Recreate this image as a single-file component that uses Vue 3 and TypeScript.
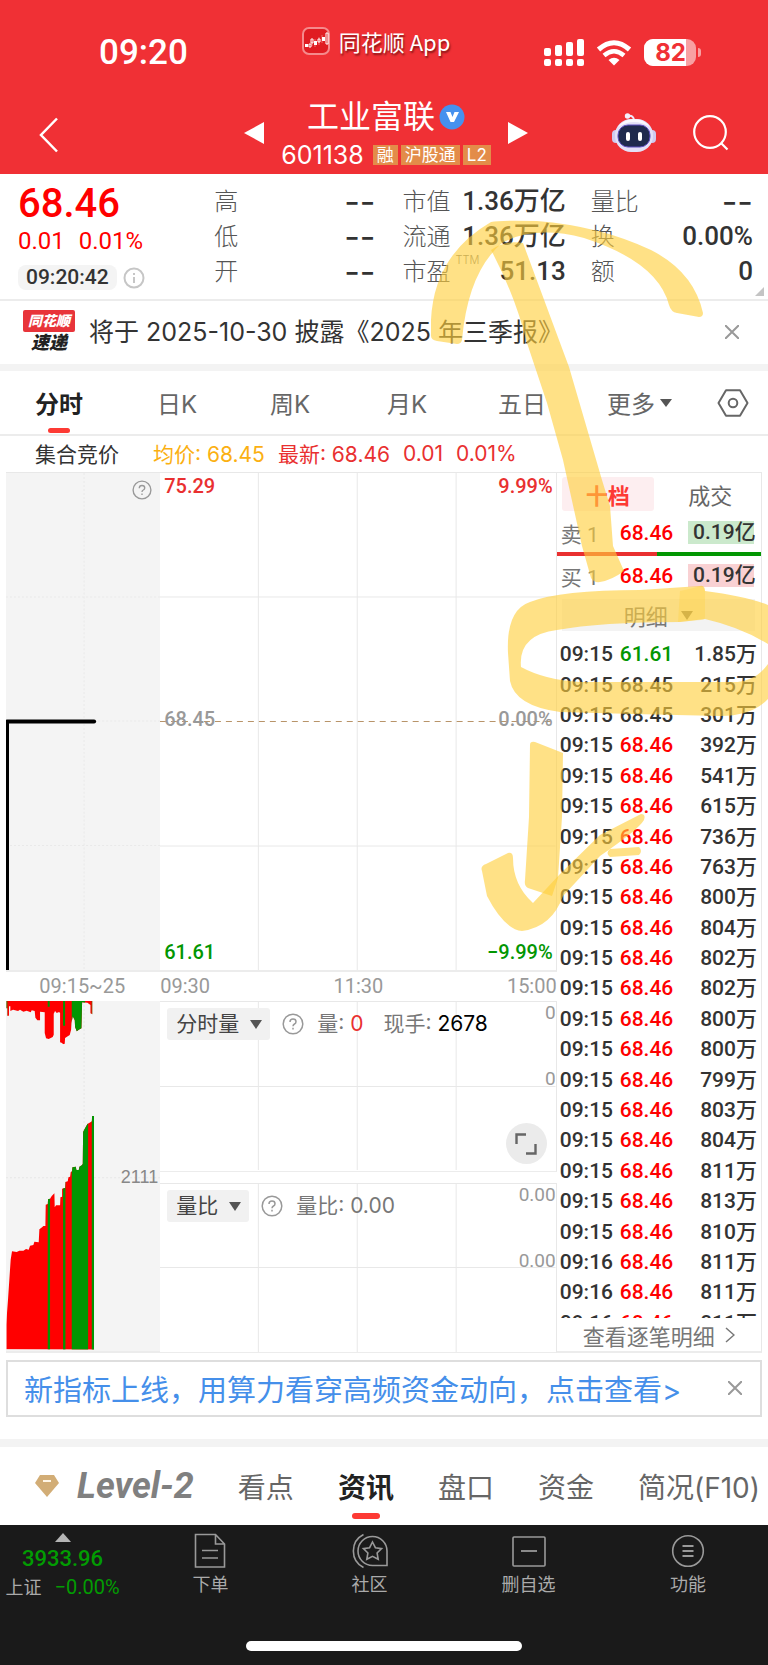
<script setup lang="ts">
interface Pair {
  label: string
  value: string
  note?: string
  dash?: boolean
}

const stats: Pair[][] = [
  [
    { label: '高', value: '--', dash: true },
    { label: '低', value: '--', dash: true },
    { label: '开', value: '--', dash: true },
  ],
  [
    { label: '市值', value: '1.36万亿' },
    { label: '流通', value: '1.36万亿' },
    { label: '市盈', value: '51.13', note: 'TTM' },
  ],
  [
    { label: '量比', value: '--', dash: true },
    { label: '换', value: '0.00%' },
    { label: '额', value: '0' },
  ],
]

const periods: string[] = ['分时', '日K', '周K', '月K', '五日', '更多']

const amounts: string[] = [
  '1.85', '215', '301', '392', '541', '615', '736', '763', '800', '804', '802', '802',
  '800', '800', '799', '803', '804', '811', '813', '810', '811', '811', '811',
]

const trades = amounts.map((amount, i) => ({
  time: i < 20 ? '09:15' : '09:16',
  price: i === 0 ? '61.61' : i < 3 ? '68.45' : '68.46',
  tone: i === 0 ? 'down' : i < 3 ? 'flat' : 'up',
  amount: amount + '万',
}))

const sections: string[] = ['看点', '资讯', '盘口', '资金', '简况(F10)']
</script>

<template>
  <div class="app">
    <header class="top">
      <div class="status">
        <span class="clock">09:20</span>
        <span class="source">
          <svg class="applogo" viewBox="0 0 28 28" aria-hidden="true">
            <rect x="1" y="1" width="26" height="26" rx="6" fill="#e01c22" stroke="#f58a8c" stroke-width="2" />
            <path d="M10 13v6M13 12v8M17 10v8M20 8v8" stroke="#f06a6c" stroke-width="1" />
            <path d="M3 17h3v3H3zM12 14h3v4h-3zM20 10h3v4h-3z" fill="#fff" />
            <path d="M7 17h2v3H7zM9 12h2v4H9zM16 12h2v3h-2zM24 6h2v11h-2z" fill="none" stroke="#fff" stroke-width="1" />
          </svg>
          同花顺 App
        </span>
        <span class="signals">
          <svg class="cell" viewBox="0 0 40 28" aria-hidden="true">
            <g fill="#fff">
              <rect x="0" y="9" width="7" height="8" rx="2" /><rect x="11" y="6" width="7" height="11" rx="2" />
              <rect x="22" y="3" width="7" height="14" rx="2" /><rect x="33" y="0" width="7" height="17" rx="2" />
              <rect x="0" y="20" width="7" height="7" rx="2" /><rect x="11" y="20" width="7" height="7" rx="2" />
              <rect x="22" y="20" width="7" height="7" rx="2" /><rect x="33" y="20" width="7" height="7" rx="2" />
            </g>
          </svg>
          <svg class="wifi" viewBox="0 0 36 26" aria-hidden="true">
            <path d="M2.500 9.500Q18-4 33.500 9.500" fill="none" stroke="#fff" stroke-width="5" />
            <path d="M8 15.500Q18 7 28 15.500" fill="none" stroke="#fff" stroke-width="4.500" />
            <path d="M12.500 20q5.500-4.500 11 0L18 25.500z" fill="#fff" />
          </svg>
          <span class="battery"><span class="level">82</span></span>
          <span class="tip"></span>
        </span>
      </div>
      <nav class="nav">
        <button class="plain back" aria-label="返回">
          <svg width="20" height="36" viewBox="0 0 20 36"><path d="M18 1.500 2 18l16 16.500" fill="none" stroke="#fff" stroke-width="2.500" /></svg>
        </button>
        <div class="switcher">
          <button class="plain" aria-label="上一只"><svg width="20" height="22" viewBox="0 0 20 22"><path d="M20 0v22L0 11z" fill="#fff" /></svg></button>
          <div class="stock">
            <h1>
              工业富联
              <svg width="26" height="26" viewBox="0 0 26 26" aria-hidden="true">
                <circle cx="13" cy="13" r="12.500" fill="#4691ee" />
                <path d="M7 8h4.500l2 5 2-5H20l-5 10h-3.500z" fill="#fff" />
              </svg>
            </h1>
            <p><span class="code">601138</span><b>融</b><b>沪股通</b><b>L2</b></p>
          </div>
          <button class="plain" aria-label="下一只"><svg width="20" height="22" viewBox="0 0 20 22"><path d="M0 0v22l20-11z" fill="#fff" /></svg></button>
        </div>
        <div class="tools">
          <button class="plain" aria-label="智能助手">
            <svg width="44" height="42" viewBox="0 0 44 42">
              <path d="M16 4q6-1 6 5" fill="none" stroke="#eee9fb" stroke-width="2" />
              <circle cx="15.500" cy="4" r="2.700" fill="#f4f1fd" />
              <rect x="0" y="18" width="8" height="13" rx="4" fill="#cfcaf0" /><rect x="36" y="18" width="8" height="13" rx="4" fill="#cfcaf0" />
              <rect x="3" y="7" width="38" height="33" rx="16" fill="#e3e0f7" />
              <path d="M6 15Q12 7 22 7t16 8Q30 10 22 10T6 15z" fill="#faf9ff" />
              <rect x="6" y="13" width="32" height="22" rx="10" fill="#1f2a4d" stroke="#5e4ec0" stroke-width="1" />
              <rect x="14" y="20" width="4" height="9" rx="2" fill="#fff" /><rect x="26" y="20" width="4" height="9" rx="2" fill="#fff" />
            </svg>
          </button>
          <button class="plain" aria-label="搜索">
            <svg width="36" height="36" viewBox="0 0 36 36"><circle cx="17" cy="17" r="15.800" fill="none" stroke="#fff" stroke-width="2.200" /><path d="m28 28 6.500 6.500" stroke="#fff" stroke-width="2.200" /></svg>
          </button>
        </div>
      </nav>
    </header>

    <section class="quote">
      <div class="price">
        <strong>68.46</strong>
        <p class="change"><span>0.01</span><span>0.01%</span></p>
        <p class="stamp">
          <time>09:20:42</time>
          <svg width="22" height="22" viewBox="0 0 22 22" aria-hidden="true"><circle cx="11" cy="11" r="9.500" fill="none" stroke="#c6c6c6" stroke-width="2" /><path d="M11 6v2M11 10v6" stroke="#c6c6c6" stroke-width="2" /></svg>
        </p>
      </div>
      <dl v-for="(col, c) in stats" :key="c" class="stat">
        <div v-for="row in col" :key="row.label">
          <dt>{{ row.label }}<sup v-if="row.note">{{ row.note }}</sup></dt>
          <dd :class="{ dash: row.dash }">{{ row.value }}</dd>
        </div>
      </dl>
      <span class="corner"></span>
    </section>

    <section class="news">
      <span class="express"><b>同花顺</b><i>速递</i></span>
      <a href="#">将于 2025-10-30 披露《2025 年三季报》</a>
      <button class="plain" aria-label="关闭">
        <svg width="14" height="14" viewBox="0 0 14 14"><path d="m0 0 14 14M14 0 0 14" stroke="#999" stroke-width="2" /></svg>
      </button>
    </section>

    <nav class="periods">
      <button v-for="(p, i) in periods" :key="p" class="plain" :class="{ on: i === 0 }">
        {{ p }}<svg v-if="i === 5" width="12" height="8" viewBox="0 0 12 8"><path d="M0 0h12L6 8z" fill="#555" /></svg>
      </button>
      <button class="plain gear" aria-label="设置">
        <svg width="32" height="28" viewBox="0 0 32 28"><path d="M9 1.200h14L30.500 14 23 26.800H9L1.500 14z" fill="none" stroke="#666" stroke-width="2" stroke-linejoin="round" /><circle cx="16" cy="14" r="4.300" fill="none" stroke="#666" stroke-width="2" /></svg>
      </button>
    </nav>

    <div class="summary">
      <span class="mode">集合竞价</span><span class="avg">均价: 68.45</span>
      <span>最新: 68.46</span><span>0.01</span><span>0.01%</span>
    </div>

    <main class="board">
      <div class="plot auction">
        <svg class="canvas" viewBox="0 0 154 499" preserveAspectRatio="none" aria-hidden="true">
          <path d="M78 0v499M0 124.500h154M0 249h154M0 374h154" stroke="#e9e9e9" stroke-width="1" stroke-dasharray="2 2" fill="none" />
          <path d="M1.500 499V249.500" stroke="#000" stroke-width="3" />
          <path d="M1 249.500h87" stroke="#000" stroke-width="4" stroke-linecap="round" />
        </svg>
        <svg class="help" width="20" height="20" viewBox="0 0 22 22" aria-hidden="true"><circle cx="11" cy="11" r="9.800" fill="none" stroke="#999" stroke-width="1.500" /><path d="M8 9q0-3 3-3t3 2.700q0 1.500-1.500 2.300T11 13.200M11 14.800v1.800" fill="none" stroke="#999" stroke-width="1.500" /></svg>
      </div>
      <div class="plot">
        <svg class="canvas" viewBox="0 0 396 499" preserveAspectRatio="none" aria-hidden="true">
          <path d="M98.500 0v499M197.500 0v499M296.500 0v499M0 124.500h396M0 374.500h396" stroke="#e8e8e8" fill="none" />
          <path d="M0 249.500h396" stroke="#b89468" stroke-dasharray="6 5" />
        </svg>
        <div class="scale">
          <p class="hi"><span>75.29</span><span>9.99%</span></p>
          <p class="mid"><span>68.45</span><span>0.00%</span></p>
          <p class="lo"><span>61.61</span><span>−9.99%</span></p>
        </div>
      </div>
      <div class="axis first"><span>09:15~25</span></div>
      <div class="axis"><span>09:30</span><span>11:30</span><span>15:00</span></div>
      <div class="plot auction volume">
        <svg class="canvas" viewBox="18 64 462 1056" preserveAspectRatio="none" aria-hidden="true">
          <clipPath id="vol"><path d="M19 1109V1035l2-35 3-40 4-60 4-60 4-25 14 2 8-4h12l8-5 8 2 4-12 10-2 3-10 13 2 2-39 8-6 4-4h6l1-64 6-2 1-14 6-2 5-8 8-8 1 42 4-6h12l1-24 5-2v-24l9-2 1-18 7-2 2-12 5-2 2-14 4-2 1-12 10-2 2 10h7l2-10 7-4 3-4 1-96 5-10 8-14 10-6 3-2 1-16h6v701z" /></clipPath>
          <clipPath id="net"><path d="M19 64V86h3v22h5V80h4v14l8-4 15 4 6-4 10 6 10-3 12 5 3-6 9 2 2 20 6 8h8V96l14 2v62l4 16 8 2 12-6 3-7V102l4-8 5 6 7-3 3 3v88l6 2 3 4 5-2 1-17 8-5 6-4 4-16 1-20 4-20 6 12 1 20 5 13 6-5 8-4 2-78 16 1 5 4 4 3v25l6 3V64z" /></clipPath>
          <path d="M252 64v660M18 594h462" stroke="#e6e6e6" stroke-width="3" stroke-dasharray="6 6" />
          <g clip-path="url(#vol)"><path d="M18 400h264v710H18z" fill="#f00" /><path d="M143 400h7v710h-7zM189 400h7v710h-7zM215 400h49v710h-49zM275 400h8v710h-8z" fill="#029602" /></g>
          <g clip-path="url(#net)"><path d="M18 64h264v140H18z" fill="#f00" /><path d="M18 64h4v140h-4zM143 64h6v17h-6zM189 64h6v74h-6zM215 64h40v140h-40zM275 64h8v140h-8z" fill="#029602" /></g>
        </svg>
        <span class="mark">2111</span>
      </div>
      <div class="subs">
        <div class="plot">
          <svg class="canvas" viewBox="0 0 396 170" preserveAspectRatio="none" aria-hidden="true"><path d="M98.500 0v170M197.500 0v170M296.500 0v170M0 85.500h396" stroke="#e8e8e8" fill="none" /></svg>
          <div class="legend">
            <button class="chip">分时量<svg width="12" height="9" viewBox="0 0 12 9"><path d="M0 0h12L6 9z" fill="#555" /></svg></button>
            <svg class="q" width="22" height="22" viewBox="0 0 22 22" aria-hidden="true"><circle cx="11" cy="11" r="9.800" fill="none" stroke="#999" stroke-width="1.500" /><path d="M8 9q0-3 3-3t3 2.700q0 1.500-1.500 2.300T11 13.200M11 14.800v1.800" fill="none" stroke="#999" stroke-width="1.500" /></svg>
            <span>量: <em>0</em></span><span class="hand">现手: <b>2678</b></span>
          </div>
          <div class="ticks"><span>0</span><span>0</span></div>
          <button class="expand" aria-label="全屏"><svg width="22" height="22" viewBox="0 0 22 22"><path d="M1.500 11V1.500H11M20.500 11v9.500H11" fill="none" stroke="#666" stroke-width="2.400" /></svg></button>
        </div>
        <div class="plot">
          <svg class="canvas" viewBox="0 0 396 170" preserveAspectRatio="none" aria-hidden="true"><path d="M98.500 0v170M197.500 0v170M296.500 0v170M0 84.500h396" stroke="#e8e8e8" fill="none" /></svg>
          <div class="legend">
            <button class="chip">量比<svg width="12" height="9" viewBox="0 0 12 9"><path d="M0 0h12L6 9z" fill="#555" /></svg></button>
            <svg class="q" width="22" height="22" viewBox="0 0 22 22" aria-hidden="true"><circle cx="11" cy="11" r="9.800" fill="none" stroke="#999" stroke-width="1.500" /><path d="M8 9q0-3 3-3t3 2.700q0 1.500-1.500 2.300T11 13.200M11 14.800v1.800" fill="none" stroke="#999" stroke-width="1.500" /></svg>
            <span>量比: 0.00</span>
          </div>
          <div class="ticks"><span>0.00</span><span>0.00</span></div>
        </div>
      </div>

      <aside class="depth">
        <div class="booktabs"><button class="plain on">十档</button><button class="plain">成交</button></div>
        <div class="level1"><span>卖 1</span><b>68.46</b><i class="ask">0.19亿</i></div>
        <div class="ratio"></div>
        <div class="level1"><span>买 1</span><b>68.46</b><i class="bid">0.19亿</i></div>
        <button class="detail">明细<svg width="12" height="9" viewBox="0 0 12 9"><path d="M0 0h12L6 9z" fill="#666" /></svg></button>
        <div class="feed">
          <table>
            <tbody>
              <tr v-for="(t, i) in trades" :key="i"><td>{{ t.time }}</td><td :class="t.tone">{{ t.price }}</td><td>{{ t.amount }}</td></tr>
            </tbody>
          </table>
        </div>
        <a class="more" href="#">查看逐笔明细<svg width="10" height="16" viewBox="0 0 10 16"><path d="m1 1 8 7-8 7" fill="none" stroke="#777" stroke-width="1.500" /></svg></a>
      </aside>
    </main>

    <section class="promo">
      <a href="#">新指标上线，用算力看穿高频资金动向，点击查看&gt;</a>
      <button class="plain" aria-label="关闭"><svg width="14" height="14" viewBox="0 0 14 14"><path d="m0 0 14 14M14 0 0 14" stroke="#999" stroke-width="2" /></svg></button>
    </section>

    <nav class="sections">
      <button class="plain l2">
        <svg width="24" height="22" viewBox="0 0 24 22" aria-hidden="true"><path d="M5 0h14l5 8-12 14L0 8z" fill="#d2ad76" /><path d="M8 6h8" stroke="#fff6e6" stroke-width="2" /></svg>
        Level-2
      </button>
      <button v-for="s in sections" :key="s" class="plain" :class="{ on: s === '资讯' }">{{ s }}</button>
    </nav>

    <footer class="bottom">
      <div class="bar">
        <button class="plain index">
          <svg width="16" height="9" viewBox="0 0 16 9"><path d="M8 0l8 9H0z" fill="#b5b5b5" /></svg>
          <strong>3933.96</strong>
          <span>上证 <em>−0.00%</em></span>
        </button>
        <button class="plain"><svg width="36" height="36" viewBox="0 0 36 36"><path d="M2.500 1.500h20l9 9.500v23h-29zM22.500 1.500V11h9M9 17.500h16M9 25h16" fill="none" stroke="#999" stroke-width="1.600" /></svg>下单</button>
        <button class="plain"><svg width="36" height="36" viewBox="0 0 36 36"><path d="M20.500 3.500A14.500 14.500 0 1 0 20.500 32.500H35V18A14.500 14.500 0 0 0 20.500 3.500zM11.500 1.500a18.500 18.500 0 0 0 0 33" fill="none" stroke="#999" stroke-width="1.600" /><path d="m20.500 9 2.900 5.700 6.200.9-4.500 4.400 1.100 6.300-5.700-3-5.700 3 1.100-6.300-4.500-4.400 6.200-.9z" fill="none" stroke="#999" stroke-width="1.600" /></svg>社区</button>
        <button class="plain"><svg width="36" height="36" viewBox="0 0 36 36"><rect x="2" y="4" width="32" height="29" rx="1" fill="none" stroke="#999" stroke-width="1.600" /><path d="M10 18h16" stroke="#999" stroke-width="1.800" /></svg>删自选</button>
        <button class="plain"><svg width="36" height="36" viewBox="0 0 36 36"><circle cx="18" cy="18" r="15.300" fill="none" stroke="#999" stroke-width="1.600" /><path d="M12.500 13h11M12.500 18h11M12.500 23h11" stroke="#999" stroke-width="1.800" /></svg>功能</button>
      </div>
      <span class="home"></span>
    </footer>

    <svg class="marker" viewBox="0 0 768 1665" preserveAspectRatio="none" aria-hidden="true">
      <path d="M431 320Q434 255 491 222Q500 220 537 221Q600 226 651 250Q694 272 703 313Q703 317 699 317L677 313Q671 312 669 305Q658 262 584 238Q535 225 502 243Q468 272 462 340Q461 344 457 344L437 341Q431 340 431 336z" />
      <path d="M491 250Q505 240 523 243L569 367L602 480L610 506L613 546L624 571Q612 580 600 582Q594 583 591 578L582 546L563 460L547 403L527 343Q515 295 491 250z" />
      <path fill-rule="evenodd" d="M508 653Q506 610 530 602Q560 590 640 590L700 586Q704 585 705 591Q745 596 768 605V699Q752 716 720 716L633 714L560 712Q515 706 510 681zM521 667Q518 635 557 630Q600 622 680 622L705 619Q740 627 768 644V664Q755 682 733 682H580Q545 680 521 667z" />
      <path d="M530 745Q530 741 535 742L563 753L562 817L558 878L552 896L528 888Q524 886 525 880L529 817z" />
      <path d="M482 871Q480 866 486 864L508 853Q513 852 513 858Q513 885 533 903L560 874L600 835L641 814Q646 814 644 820Q638 830 600 856L563 896Q552 927 522 931Q504 929 487 896z" />
      <path d="M610 849l29-2q4 4 0 8l-29 2q-5-4 0-8z" />
      <path class="soft" d="M680 591l22-5q3 0 3 4v27q0 3-4 3l-23 2z" />
    </svg>
  </div>
</template>

<style>
body { margin: 0; background: #fff; }
</style>

<style scoped>
* { box-sizing: border-box; }
.app { position: relative; font-family: Inter, "Noto Sans CJK SC", sans-serif; color: #333; background: #fff; overflow: hidden; }
p, h1, dl, dd { margin: 0; }
em, i { font-style: normal; }
a { color: inherit; text-decoration: none; }
svg { flex: none; }
.plain { padding: 0; border: 0; background: none; color: inherit; font: inherit; display: flex; align-items: center; justify-content: center; }

.top { height: 174px; background: #f03035; color: #fff; }
.status { height: 92px; padding-top: 13px; display: grid; grid-template-columns: 1fr auto 1fr; align-items: center; }
.clock { padding-left: 99px; font-size: 35px; line-height: 40px; font-weight: 500; font-family: Roboto, sans-serif; }
.source { display: flex; align-items: center; gap: 9px; margin: 0 16px 24px 0; font-size: 22px; line-height: 28px; font-family: "Noto Sans CJK SC", sans-serif; text-shadow: 1px 2px 2px rgba(60, 0, 0, 0.6); }
.applogo { width: 28px; height: 28px; }
.signals { display: flex; align-items: center; justify-content: flex-end; padding-right: 67px; }
.cell { width: 40px; height: 28px; margin-right: 12px; }
.wifi { width: 36px; height: 26px; margin-right: 12px; }
.battery { width: 52px; height: 27px; border-radius: 9px; overflow: hidden; background: #f8a0a2; }
.level { display: block; width: 42px; background: #fff; color: #f03035; font-weight: 700; font-size: 24px; line-height: 27px; text-align: right; }
.tip { width: 3px; height: 9px; margin-left: 2px; border-radius: 0 4px 4px 0; background: #f8a0a2; }
.nav { height: 82px; padding: 0 39px; display: grid; grid-template-columns: 1fr auto 1fr; align-items: center; }
.back { justify-self: start; margin-top: 3px; }
.switcher { display: flex; align-items: center; gap: 17px; margin-left: 4px; }
.stock { text-align: center; }
h1 { display: flex; justify-content: center; align-items: center; gap: 4px; font-weight: 400; font-size: 32px; line-height: 44px; }
.stock p { display: flex; align-items: center; gap: 3px; line-height: 32px; }
.code { font-size: 25px; margin-right: 6px; }
.stock b { background: #e38c49; font-weight: 400; font-size: 17px; line-height: 20px; padding: 0 4px; }
.tools { display: flex; justify-content: flex-end; align-items: center; gap: 37px; }

.quote { position: relative; display: flex; height: 127px; padding: 10px 15px 0 18px; border-bottom: 2px solid #ececec; }
.price { flex: 196; color: #f00; font-family: Roboto, sans-serif; }
.price strong { display: block; font-size: 40px; line-height: 40px; font-weight: 500; }
.change { display: flex; gap: 14px; font-size: 24px; line-height: 34px; }
.stamp { display: flex; align-items: center; gap: 6px; margin-top: 7px; }
time { background: #f4f4f4; color: #333; border-radius: 8px; padding: 0 8px; font-size: 21px; line-height: 25px; font-weight: 500; }
.stat { flex: 161; }
.stat + .stat { flex: 163; margin-left: 27px; }
.stat + .stat + .stat { flex: 162; margin-left: 25px; }
.stat div { display: flex; justify-content: space-between; height: 35px; align-items: center; line-height: 35px; }
dt { position: relative; font-size: 24px; color: #555; font-weight: 300; white-space: nowrap; }
sup { position: absolute; left: 100%; top: 0; margin-left: 5px; font-size: 11px; line-height: 12px; color: #777; }
dd { font-family: Roboto, "Noto Sans CJK SC", sans-serif; font-weight: 500; font-size: 26px; white-space: nowrap; }
dd.dash { font-family: Inter, sans-serif; font-size: 34px; font-weight: 400; }
.corner { position: absolute; right: 4px; bottom: 3px; border-left: 9px solid transparent; border-bottom: 9px solid #c4c4c4; }

.news { display: flex; align-items: center; height: 70px; padding: 0 29px 2px 22px; border-bottom: 7px solid #f3f3f3; }
.express { display: flex; flex-direction: column; align-items: center; width: 54px; font-style: italic; font-weight: 900; }
.express b { background: #e8343a; color: #fff; font-size: 14px; line-height: 22px; width: 52px; text-align: center; border-radius: 2px; font-weight: 900; }
.express i { color: #222; font-size: 18px; line-height: 22px; font-weight: 900; font-style: italic; }
.news a { flex: 1; margin-left: 13px; font-size: 25px; line-height: 36px; white-space: nowrap; }

.periods { display: grid; grid-template-columns: 122fr 113fr 117fr 111fr 109fr 110fr 51fr; height: 65px; padding-left: 35px; border-bottom: 2px solid #ececec; color: #666; font-size: 24px; }
.periods button { justify-content: flex-start; justify-self: start; }
.periods svg { margin-left: 5px; }
.periods .gear svg { margin-left: 0; }
.on { font-weight: 700; color: #222; position: relative; }
.periods .on::after, .sections .on::after { content: ""; position: absolute; left: 50%; bottom: 1px; width: 22px; margin-left: -11px; height: 5px; border-radius: 3px; background: #fd3a34; }

.summary { display: flex; align-items: center; height: 36px; padding: 0 0 2px 35px; font-size: 21px; gap: 13px; color: #e93030; white-space: nowrap; }
.mode { color: #333; margin-right: 21px; }
.avg { color: #fbb012; }

.board { display: grid; margin: 0 6px; grid-template-columns: 154fr 396fr 205fr; grid-template-rows: 499px 29px 352px; border-top: 1px solid #e8e8e8; }
.plot { position: relative; display: grid; border-bottom: 2px solid #ececec; border-right: 1px solid #e8e8e8; min-width: 0; }
.canvas { grid-area: 1 / 1; width: 100%; height: 100%; min-height: 0; }
.auction { background: #f4f4f4; border-right: 0; }
.help { position: absolute; right: 8px; top: 7px; }
.scale { grid-area: 1 / 1; display: flex; flex-direction: column; justify-content: space-between; padding: 1px 3px 6px 4px; font: 500 20px/24px Roboto, sans-serif; }
.scale p { display: flex; justify-content: space-between; }
.hi { color: #e93030; }
.mid { color: #999; }
.lo { color: #029602; }
.axis { display: flex; justify-content: space-between; align-items: center; padding-bottom: 2px; color: #999; font: 20px/24px Roboto, sans-serif; }
.axis.first { justify-content: flex-end; padding-right: 35px; }
.volume { grid-row: 3; overflow: hidden; }
.volume .canvas { height: 352px; }
.mark { position: absolute; right: 2px; top: 50%; margin-top: -11px; font: 18px/24px "Liberation Sans", sans-serif; color: #888; }
.subs { display: grid; grid-template-rows: 171px 170px; gap: 11px; }
.subs .plot { border-top: 1px solid #e8e8e8; border-bottom-width: 1px; }
.subs .canvas { height: 168px; }
.legend { grid-area: 1 / 1; align-self: start; display: flex; align-items: center; margin: 6px 0 0 7px; font-size: 21px; line-height: 32px; color: #777; white-space: nowrap; }
.chip { display: flex; align-items: center; gap: 11px; border: 0; border-radius: 3px; padding: 0 8px 0 9px; background: #f1f1f1; color: #444; font: inherit; height: 32px; }
.q { margin: 0 13px 0 12px; }
.legend em { color: #e93030; }
.hand { margin-left: 20px; }
.hand b { color: #000; font-weight: 400; }
.ticks { position: absolute; right: 0; top: 0; display: flex; flex-direction: column; gap: 44px; text-align: right; font: 19px/22px Roboto, sans-serif; color: #999; }
.expand { position: absolute; right: 9px; bottom: 7px; width: 41px; height: 41px; padding: 0; border: 0; border-radius: 50%; background: #ebebeb; display: flex; align-items: center; justify-content: center; }

.depth { grid-column: 3; grid-row: 1 / 4; display: flex; flex-direction: column; border-right: 1px solid #e8e8e8; border-bottom: 2px solid #ececec; min-width: 0; font-size: 21px; }
.booktabs { display: grid; grid-template-columns: 92px 1fr; padding: 4px 0 0 5px; height: 38px; color: #666; font-size: 22px; }
.booktabs button + button { padding-left: 6px; }
.booktabs .on { background: #fdeef0; border-radius: 3px; color: #fd3a34; }
.level1 { display: grid; grid-template-columns: 59px 1fr 66px; align-items: center; height: 43px; padding: 0 7px 0 4px; font-family: Roboto, "Noto Sans CJK SC", sans-serif; }
.level1 span { color: #777; }
.level1 b { color: #f00; font-weight: 500; }
.level1 i { height: 23px; line-height: 23px; padding-left: 5px; font-weight: 500; white-space: nowrap; }
.ask { background: #cbe9cc; }
.bid { background: #f9d1d3; }
.ratio { height: 4px; margin: -2px 0 -2px; background: linear-gradient(90deg, #e93030 49%, #029602 49%); }
.detail { display: flex; align-items: center; justify-content: center; gap: 13px; height: 32px; margin: 2px 6px 8px 5px; padding: 0; border: 0; background: #f3f3f3; color: #777; font: inherit; font-size: 22px; }
.feed { height: 679px; overflow: hidden; padding: 0 4px 0 3px; }
table { width: 100%; height: 699px; border-collapse: collapse; font-family: Roboto, "Noto Sans CJK SC", sans-serif; font-weight: 500; line-height: 28px; }
td { padding: 0; white-space: nowrap; }
td:first-child { width: 60px; }
td:last-child { text-align: right; }
.up { color: #f00; }
.down { color: #029602; }
.more { flex: 1; display: flex; align-items: center; justify-content: center; gap: 10px; color: #777; font-size: 22px; }

.promo { display: flex; align-items: center; justify-content: space-between; margin: 7px 6px 22px; height: 57px; padding: 0 18px 2px 16px; border: 2px solid #dedede; color: #458fea; font-size: 29px; white-space: nowrap; }

.sections { display: flex; height: 86px; border-top: 8px solid #f3f3f3; padding: 0 8px 1px 35px; justify-content: space-between; color: #666; font-size: 28px; }
.l2 { gap: 18px; font-size: 36px; font-weight: 700; font-style: italic; font-family: Roboto, sans-serif; color: #808080; }
.sections .on::after { width: 28px; margin-left: -14px; bottom: 5px; height: 6px; }

.bottom { background: #1a1a1a; color: #aaa; }
.bar { display: grid; grid-template-columns: 131fr 159fr 159fr 159fr 160fr; height: 80px; padding-top: 8px; }
.bar button { flex-direction: column; justify-content: flex-start; font-size: 18px; line-height: 32px; }
.bar .index { padding-right: 6px; }
.index strong { color: #029c02; font: 500 22px/34px Roboto, sans-serif; }
.index span { line-height: 22px; white-space: nowrap; }
.index em { color: #029c02; font: 20px/22px Roboto, sans-serif; margin-left: 8px; }
.home { display: block; width: 276px; height: 10px; border-radius: 5px; background: #fff; margin: 36px auto 0; }
.bottom::after { content: ""; display: block; height: 14px; }

.marker { position: absolute; inset: 0; width: 100%; height: 100%; pointer-events: none; }
.marker path { fill: #ffcf3c; fill-opacity: 0.62; }
.marker .soft { fill-opacity: 0.3; }
</style>
